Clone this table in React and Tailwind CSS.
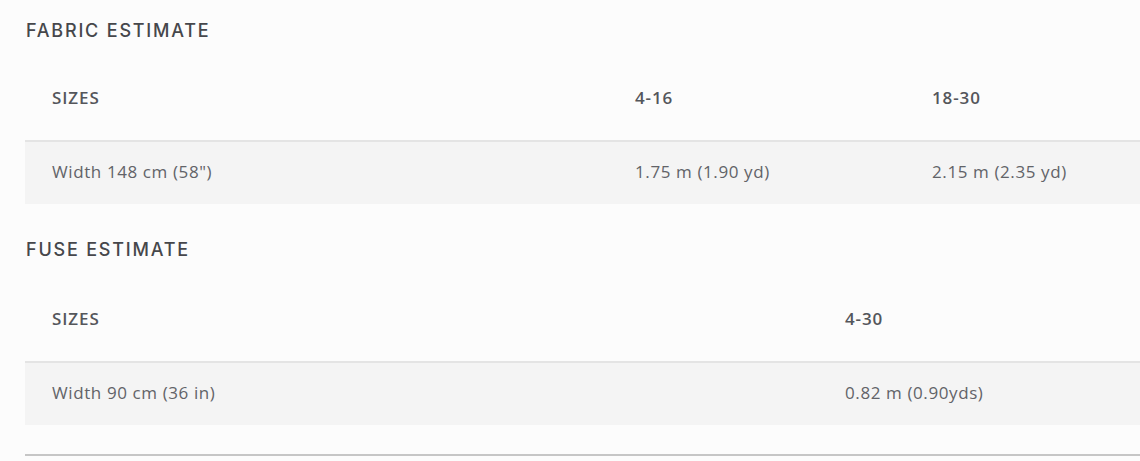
const fabric = {
  heads: ['SIZES', '4-16', '18-30'],
  row: ['Width 148 cm (58")', '1.75 m (1.90 yd)', '2.15 m (2.35 yd)'],
  widths: ['w-[583px]', 'w-[297px]', ''],
}

const fuse = {
  heads: ['SIZES', '4-30'],
  row: ['Width 90 cm (36 in)', '0.82 m (0.90yds)'],
  widths: ['w-[793px]', ''],
}

function EstimateTable({ data }) {
  return (
    <table className="w-[1115px] border-collapse table-fixed text-left">
      <thead>
        <tr className="border-b-2 border-[#e4e4e4]">
          {data.heads.map((h, i) => (
            <th key={h} className={`${data.widths[i]} px-[27px] py-[30px] text-[17px] leading-6 font-semibold tracking-[0.9px] text-[#54565b]`}>
              {h}
            </th>
          ))}
        </tr>
      </thead>
      <tbody>
        <tr className="bg-[#f4f4f4]">
          {data.row.map((c) => (
            <td key={c} className="px-[27px] pt-[18px] pb-[20px] text-[17px] leading-6 tracking-[0.6px] text-[#626368]">
              {c}
            </td>
          ))}
        </tr>
      </tbody>
    </table>
  )
}

export default function App() {
  return (
    <div className="w-[1140px] h-[461px] overflow-hidden bg-[#fcfcfc] pl-[25px] font-['Open_Sans',sans-serif]">
      <h2 className="pt-[18px] pb-[12px] pl-px text-[18px] leading-[26px] font-medium tracking-[1.8px] text-[#46474b] font-['Inter',sans-serif]">
        FABRIC ESTIMATE
      </h2>
      <EstimateTable data={fabric} />
      <h2 className="pt-[33px] pb-[14px] pl-px text-[18px] leading-[26px] font-medium tracking-[1.8px] text-[#46474b] font-['Inter',sans-serif]">
        FUSE ESTIMATE
      </h2>
      <EstimateTable data={fuse} />
      <div className="mt-[29px] h-[2px] bg-[#c6c6c6]" />
    </div>
  )
}
